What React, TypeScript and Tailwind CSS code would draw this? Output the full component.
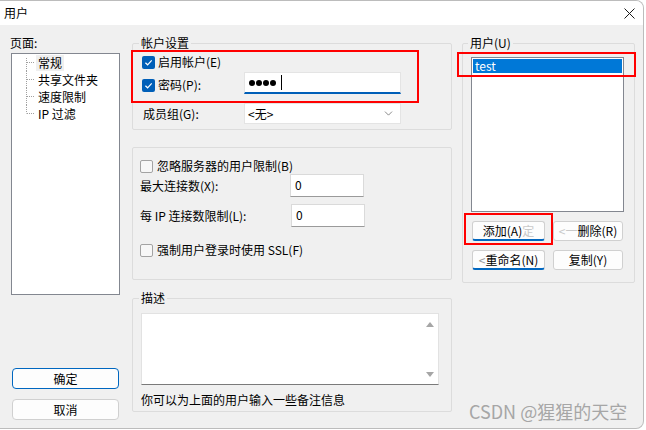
import { ChevronDown } from "lucide-react";
import type { ReactNode } from "react";

function CheckBox({ checked }: { checked?: boolean }) {
  if (checked) {
    return (
      <span className="flex h-[13px] w-[13px] shrink-0 items-center justify-center rounded-[2px] bg-[#005fb8]">
        <svg width="9" height="9" viewBox="0 0 9 9">
          <path d="M1.4 4.7 L3.6 6.8 L7.7 2.3" fill="none" stroke="#fff" strokeWidth="1.2" />
        </svg>
      </span>
    );
  }
  return <span className="h-[13px] w-[13px] shrink-0 rounded-[2px] border border-[#a3a3a3] bg-[#f7f7f7]" />;
}

function Btn({ children, focused, className = "" }: { children: ReactNode; focused?: boolean; className?: string }) {
  return (
    <div
      className={`flex h-[20px] items-center justify-center rounded-[3px] border border-[#d0d0d0] bg-[#fdfdfd] ${
        focused ? "border-b-2 border-b-[#0067c0]" : ""
      } ${className}`}
    >
      {children}
    </div>
  );
}

function TreeLine({ first, last }: { first?: boolean; last?: boolean }) {
  return (
    <svg width="9" height="17" viewBox="0 0 9 17" className="shrink-0">
      <line x1="0.5" y1={first ? 4 : 0} x2="0.5" y2={last ? 8.5 : 17} stroke="#a0a0a0" strokeDasharray="1 1" />
      <line x1="1" y1="8.5" x2="9" y2="8.5" stroke="#a0a0a0" strokeDasharray="1 1" />
    </svg>
  );
}

const pages = ["常规", "共享文件夹", "速度限制", "IP 过滤"];

function TextBox({ value }: { value: string }) {
  return (
    <div className="h-[23px] w-[74px] border border-[#dadada] border-b-[#9a9a9a] bg-white pl-[4px] pt-[2px]">{value}</div>
  );
}

export default function App() {
  return (
    <div className="relative h-[430px] w-[646px] overflow-hidden bg-white font-['Noto_Sans_CJK_SC',sans-serif] text-[12px] leading-[16px] text-black">
      <div className="flex h-[429px] w-[644px] flex-col overflow-hidden rounded-br-[8px] rounded-tr-[8px] border-b border-r border-t border-[#bcbcbc] bg-[#f0f0f0]">
        {/* title bar */}
        <div className="flex h-[24px] items-center justify-between bg-white pl-[4px] pr-[8px]">
          <span>用户</span>
          <svg width="11" height="11" viewBox="0 0 11 11">
            <path d="M0.5 0.5 L10.5 10.5 M10.5 0.5 L0.5 10.5" stroke="#1a1a1a" strokeWidth="1" />
          </svg>
        </div>

        <div className="flex flex-1 pt-[10px]">
          {/* left: pages */}
          <div className="ml-[11px] flex w-[109px] flex-col">
            <span className="-ml-[1px]">页面:</span>
            <div className="mt-[2px] h-[242px] border border-[#838790] bg-white">
              {pages.map((p, i) => (
                <div key={p} className="flex h-[17px] items-center pl-[14px]">
                  <TreeLine first={i === 0} last={i === pages.length - 1} />
                  <span className={`ml-[1px] px-[2px] ${i === 0 ? "bg-[#efefef]" : ""}`}>{p}</span>
                </div>
              ))}
            </div>
            <div className="ml-[1px] mt-[73px] flex h-[21px] w-[107px] items-center justify-center rounded-[4px] border border-[#0067c0] bg-[#fdfdfd]">
              确定
            </div>
            <div className="ml-[1px] mt-[10px] flex h-[21px] w-[107px] items-center justify-center rounded-[4px] border border-[#d0d0d0] bg-[#fdfdfd]">
              取消
            </div>
          </div>

          {/* middle */}
          <div className="ml-[12px] flex w-[320px] flex-col">
            <fieldset className="h-[95px] rounded-[2px] border border-[#dcdcdc]">
              <legend className="ml-[6px] px-[2px] leading-[16px]">帐户设置</legend>
              <div className="mt-[3px] flex h-[16px] items-center gap-[3px] pl-[9px]">
                <CheckBox checked />
                <span>启用帐户(E)</span>
              </div>
              <div className="mt-[2px] flex h-[22px] pl-[9px]">
                <div className="mt-[5px] flex h-[16px] w-[102px] items-center gap-[3px]">
                  <CheckBox checked />
                  <span>密码(P):</span>
                </div>
                <div className="flex h-[22px] w-[157px] items-center gap-[1px] border border-[#e4e4e4] border-b-2 border-b-[#005fb8] bg-white pl-[4px]">
                  <span className="h-[6px] w-[6px] rounded-full bg-black" />
                  <span className="h-[6px] w-[6px] rounded-full bg-black" />
                  <span className="h-[6px] w-[6px] rounded-full bg-black" />
                  <span className="h-[6px] w-[6px] rounded-full bg-black" />
                  <span className="ml-[4px] h-[15px] w-px bg-black" />
                </div>
              </div>
              <div className="mt-[9px] flex h-[21px] items-center pl-[10px]">
                <span className="w-[101px]">成员组(G):</span>
                <div className="flex h-[21px] w-[157px] items-center justify-between border border-[#e4e4e4] bg-white pl-[3px] pr-[5px]">
                  <span>&lt;无&gt;</span>
                  <ChevronDown size={13} strokeWidth={1.3} className="text-[#5a5a5a]" />
                </div>
              </div>
            </fieldset>

            <div className="mt-[17px] h-[133px] rounded-[2px] border border-[#dcdcdc]">
              <div className="mt-[10px] flex h-[16px] items-center gap-[4px] pl-[7px]">
                <CheckBox />
                <span>忽略服务器的用户限制(B)</span>
              </div>
              <div className="flex h-[23px] items-center pl-[7px]">
                <span className="w-[150px]">最大连接数(X):</span>
                <TextBox value="0" />
              </div>
              <div className="mt-[7px] flex h-[23px] items-center pl-[7px]">
                <span className="w-[151px]">每 IP 连接数限制(L):</span>
                <TextBox value="0" />
              </div>
              <div className="mt-[15px] flex h-[16px] items-center gap-[4px] pl-[7px]">
                <CheckBox />
                <span>强制用户登录时使用 SSL(F)</span>
              </div>
            </div>

            <fieldset className="mt-[10px] h-[122px] rounded-[2px] border border-[#dcdcdc]">
              <legend className="ml-[6px] px-[2px] leading-[16px]">描述</legend>
              <div className="ml-[8px] mt-[7px] flex h-[72px] w-[298px] justify-end border border-[#e2e2e2] border-b-[#7a7a7a] bg-white">
                <div className="flex w-[17px] flex-col items-center justify-between pb-[7px] pt-[8px]">
                  <svg width="8" height="5" viewBox="0 0 8 5">
                    <path d="M0 5 L4 0 L8 5 Z" fill="#a6a6a6" />
                  </svg>
                  <svg width="8" height="5" viewBox="0 0 8 5">
                    <path d="M0 0 L8 0 L4 5 Z" fill="#a6a6a6" />
                  </svg>
                </div>
              </div>
              <div className="ml-[8px] mt-[7px]">你可以为上面的用户输入一些备注信息</div>
            </fieldset>
          </div>

          {/* right: users */}
          <fieldset className="ml-[10px] h-[248px] w-[173px] rounded-[2px] border border-[#dcdcdc]">
            <legend className="ml-[5px] px-[2px] leading-[16px]">用户(U)</legend>
            <div className="ml-[8px] mt-[6px] h-[155px] w-[153px] border border-[#838790] bg-white p-[1px]">
              <div className="h-[14px] bg-[#0078d7] pl-[2px] leading-[14px] text-white">test</div>
            </div>
            <div className="ml-[9px] mt-[9px] flex gap-[8px]">
              <Btn focused className="w-[73px]">
                添加(A)<span className="text-[#c9c9c9]">定</span>
              </Btn>
              <Btn className="w-[70px]">
                <span className="text-[#c9c9c9]">&lt;一</span>删除(R)
              </Btn>
            </div>
            <div className="ml-[9px] mt-[9px] flex gap-[8px]">
              <Btn focused className="w-[73px]">
                <span className="text-[#9a9a9a]">&lt;</span>重命名(N)
              </Btn>
              <Btn className="w-[70px]">复制(Y)</Btn>
            </div>
          </fieldset>
        </div>
      </div>

      {/* screenshot annotations */}
      <div className="absolute left-[131px] top-[50px] h-[53px] w-[288px] border-2 border-[#f00]" />
      <div className="absolute left-[457px] top-[52px] h-[25px] w-[179px] border-2 border-[#f00]" />
      <div className="absolute left-[464px] top-[213px] h-[32px] w-[89px] border-2 border-[#f00]" />
      <div className="absolute left-[469px] top-[399px] text-[18px] leading-[24px] text-[#a6a6a6]">CSDN @猩猩的天空</div>
    </div>
  );
}
